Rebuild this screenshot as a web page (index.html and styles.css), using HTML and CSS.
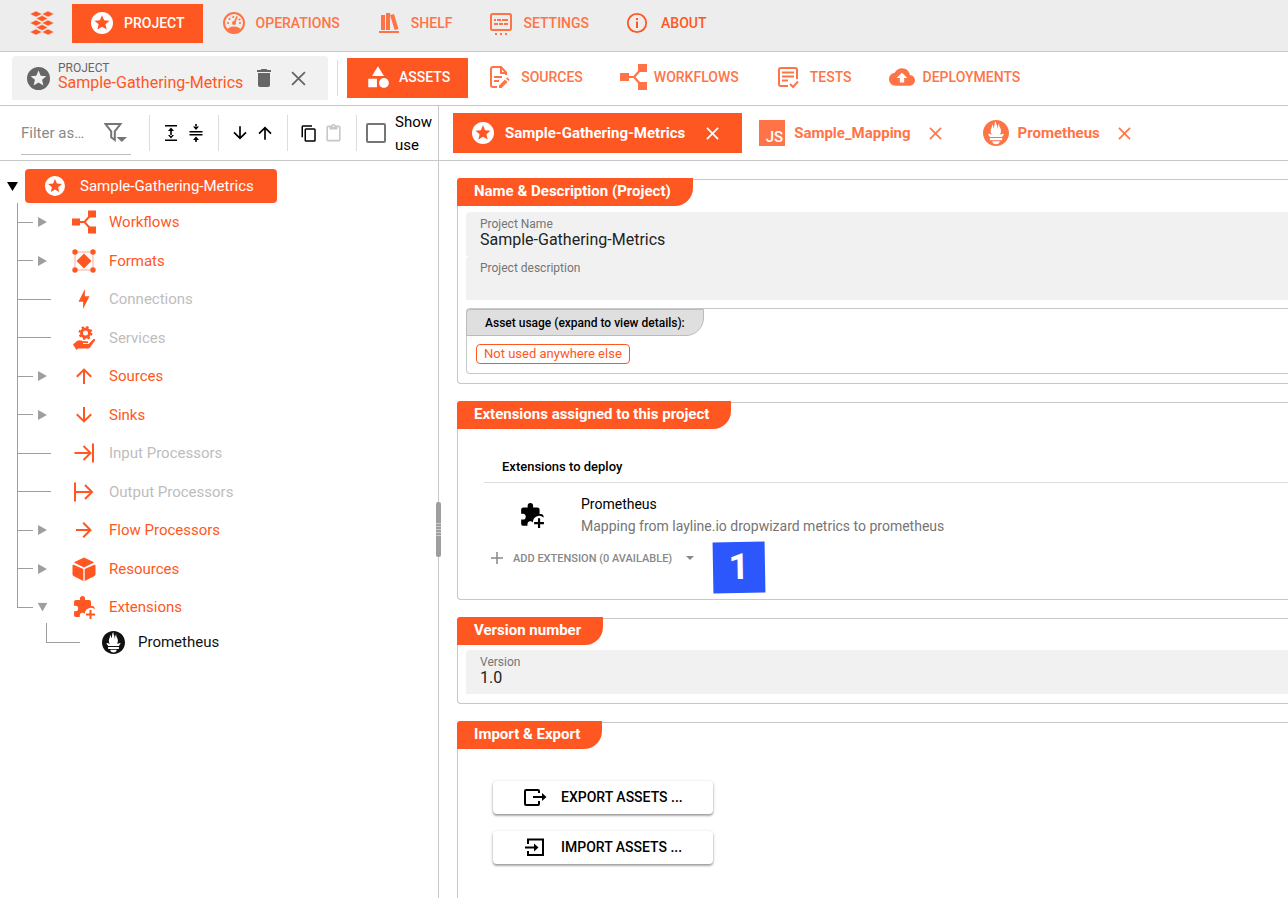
FILE: index.html
```html
<!DOCTYPE html>
<html lang="en">
<head>
<meta charset="utf-8">
<title>Sample-Gathering-Metrics</title>
<link rel="stylesheet" href="styles.css">
</head>
<body>
<svg class="sprite" aria-hidden="true">
  <symbol id="star" viewBox="2 2 20 20"><path d="M16.23,18L12,15.45L7.77,18L8.89,13.19L5.16,9.96L10.08,9.54L12,5L13.92,9.53L18.84,9.95L15.11,13.18L16.23,18M12,2C6.47,2 2,6.5 2,12A10,10 0 0,0 12,22A10,10 0 0,0 22,12A10,10 0 0,0 12,2Z"/></symbol>
  <symbol id="close" viewBox="0 0 14 14"><path d="M1 1L13 13M13 1L1 13" fill="none" stroke="currentColor" stroke-width="1.7"/></symbol>
  <symbol id="workflow" viewBox="0 0 27 26"><path d="M0 9h9v8H0zM18 0h9v8h-9zM18 18h9v8h-9z"/><path d="M9 13h5M22 4l-8 9 8 9" fill="none" stroke="currentColor" stroke-width="2.2"/></symbol>
  <symbol id="prometheus" viewBox="0 0 24 24"><path d="M12 0C5.373 0 0 5.372 0 12c0 6.627 5.373 12 12 12s12-5.373 12-12c0-6.628-5.373-12-12-12zm0 22.46c-1.885 0-3.414-1.26-3.414-2.814h6.828c0 1.553-1.528 2.813-3.414 2.813zm5.64-3.745H6.36v-2.046h11.28v2.046zm-.04-3.098H6.391c-.037-.043-.075-.086-.111-.13-1.155-1.401-1.427-2.133-1.69-2.879-.005-.025 1.4.287 2.395.511 0 0 .513.119 1.262.255-.72-.843-1.147-1.915-1.147-3.01 0-2.406 1.845-4.508 1.18-6.207.648.053 1.34 1.367 1.387 3.422.689-.951.977-2.69.977-3.755 0-1.103.727-2.385 1.454-2.429-.648 1.069.168 1.984.894 4.256.272.854.237 2.29.447 3.201.07-1.892.395-4.652 1.595-5.605-.529 1.2.079 2.702.494 3.424.671 1.164 1.078 2.047 1.078 3.716a4.642 4.642 0 01-1.11 2.996c.792-.149 1.34-.283 1.34-.283l2.573-.502s-.374 1.538-1.81 3.019z"/></symbol>
  <symbol id="arrow-up" viewBox="0 0 24 24"><path d="M13,20H11V8L5.5,13.5L4.08,12.08L12,4.16L19.92,12.08L18.5,13.5L13,8V20Z"/></symbol>
  <symbol id="arrow-down" viewBox="0 0 24 24"><path d="M11,4H13V16L18.5,10.5L19.92,11.92L12,19.84L4.08,11.92L5.5,10.5L11,16V4Z"/></symbol>
  <symbol id="arrow-right" viewBox="0 0 24 24"><path d="M4,11V13H16L10.5,18.5L11.92,19.92L19.84,12L11.92,4.08L10.5,5.5L16,11H4Z"/></symbol>
  <symbol id="puzzle" viewBox="0 0 24 24"><path d="M20 11h-1V7a2 2 0 0 0-2-2h-4V3.5a2.5 2.5 0 0 0-5 0V5H4a2 2 0 0 0-2 2v3.8h1.500a2.700 2.700 0 0 1 0 5.400H2V20a2 2 0 0 0 2 2h3.800v-1.500a2.700 2.700 0 0 1 5-1.500A6 6 0 0 1 22.600 14.200 2.500 2.500 0 0 0 20 11z"/><path d="M17.500 15h2v3.500H23v2h-3.500V24h-2v-3.500H14v-2h3.500z"/></symbol>
  <symbol id="caret" viewBox="0 0 8 9"><path d="M0 0L8 4.500L0 9z"/></symbol>
</svg>

<header class="app-bar">
  <a class="logo" href="#" aria-label="Home">
    <svg width="24" height="24" viewBox="0 0 24 24"><path d="M0 3l6-3 6 3-6 3zM12 3l6-3 6 3-6 3zM6 7.500l6-3 6 3-6 3zM0 12l6-3 6 3-6 3zM12 12l6-3 6 3-6 3zM6 16.500l6-3 6 3-6 3zM0 21l6-3 6 3-6 3zM12 21l6-3 6 3-6 3z" stroke="#ededed" stroke-width=".5"/></svg>
  </a>
  <nav class="nav">
    <button class="nav-item active"><span class="ico"><svg width="22" height="22"><use href="#star"/></svg></span>PROJECT</button>
    <button class="nav-item"><span class="ico"><svg width="24" height="24" viewBox="0 0 24 24"><circle cx="12" cy="12" r="10" fill="none" stroke="currentColor" stroke-width="2"/><path d="M4.500 19.500C6 16.500 9 15.500 12 15.500s6 1 7.500 4A11 11 0 0 1 4.500 19.500z"/><circle cx="12" cy="12" r="2"/><path d="M11.500 11.500L14.500 5l1.300.6-2.500 6.800z"/><circle cx="6" cy="12" r="1.100"/><circle cx="7.500" cy="8" r="1.100"/><circle cx="11.300" cy="6" r="1.100"/><circle cx="18" cy="12" r="1.100"/><circle cx="17.500" cy="8.500" r="1.100"/></svg></span>OPERATIONS</button>
    <button class="nav-item"><span class="ico"><svg width="24" height="24" viewBox="0 0 24 24"><path d="M4 4h4v15H4zM9 2h4v17H9zM13 4l4-1 4.500 15-3.800 1zM2 20h20v2H2z"/></svg></span>SHELF</button>
    <button class="nav-item"><span class="ico"><svg width="24" height="24" viewBox="0 0 24 24"><rect x="2" y="3" width="20" height="16" rx="1.500" fill="none" stroke="currentColor" stroke-width="2"/><path d="M5 8h2v2H5zM8 8h4v2H8zM13 8h6v2h-6zM5 12h4v2H5zM10 12h4v2h-4zM15 12h4v2h-4zM6 22h2v2H6zM11 22h2v2h-2zM16 22h2v2h-2z"/></svg></span>SETTINGS</button>
    <button class="nav-item about"><span class="ico"><svg width="22" height="22" viewBox="0 0 22 22"><circle cx="11" cy="11" r="9.200" fill="none" stroke="currentColor" stroke-width="1.800"/><path d="M10 6h2v2h-2zM10 9.500h2V16h-2z"/></svg></span>ABOUT</button>
  </nav>
</header>

<div class="project-bar">
  <div class="project-chip">
    <svg width="23" height="23"><use href="#star"/></svg>
    <div class="project-label"><span class="overline">PROJECT</span><span class="project-name">Sample-Gathering-Metrics</span></div>
    <button class="plain" aria-label="Delete project"><svg width="24" height="24" viewBox="0 0 24 24"><path d="M19,4H15.500L14.500,3H9.500L8.500,4H5V6H19M6,19A2,2 0 0,0 8,21H16A2,2 0 0,0 18,19V7H6V19Z"/></svg></button>
    <button class="plain" aria-label="Close project"><svg width="15" height="15"><use href="#close"/></svg></button>
  </div>
  <nav class="nav sub">
    <button class="nav-item active"><span class="ico"><svg width="26" height="26" viewBox="0 0 24 24"><path d="M11,13.500V21.500H3V13.500H11M12,2L17.500,11H6.500L12,2M17.500,13C20,13 22,15 22,17.500C22,20 20,22 17.500,22C15,22 13,20 13,17.500C13,15 15,13 17.500,13Z"/></svg></span>ASSETS</button>
    <button class="nav-item"><span class="ico"><svg width="24" height="24" viewBox="0 0 24 24"><path d="M10 22H6a2 2 0 0 1-2-2V4a2 2 0 0 1 2-2h8l5 5.500V10M14 2v6h5M7 12h8M7 16h5" fill="none" stroke="currentColor" stroke-width="2"/><path d="M12 20.500l6-6 2.500 2.500-6 6H12zM19 13.500l1.200-1.200 2.500 2.500-1.200 1.200z"/></svg></span>SOURCES</button>
    <button class="nav-item"><span class="ico"><svg width="27" height="26"><use href="#workflow"/></svg></span>WORKFLOWS</button>
    <button class="nav-item"><span class="ico"><svg width="24" height="24" viewBox="0 0 24 24"><path d="M12 21H5a2 2 0 0 1-2-2V5a2 2 0 0 1 2-2h14a2 2 0 0 1 2 2v9M6 7.500h12M6 11.500h12M6 15.500h6M14 19l3 3 5-5.500" fill="none" stroke="currentColor" stroke-width="2"/></svg></span>TESTS</button>
    <button class="nav-item"><span class="ico"><svg width="26" height="26" viewBox="0 0 24 24"><path d="M19.350 10.040C18.670 6.590 15.640 4 12 4 9.110 4 6.600 5.640 5.350 8.040 2.340 8.360 0 10.910 0 14c0 3.310 2.690 6 6 6h13c2.760 0 5-2.240 5-5 0-2.640-2.050-4.780-4.650-4.960zM14 13v4h-4v-4H7l5-5 5 5h-3z"/></svg></span>DEPLOYMENTS</button>
  </nav>
</div>

<div class="workspace">
  <aside class="side">
    <div class="toolbar">
      <div class="filter">
        <input type="text" placeholder="Filter as…" aria-label="Filter assets">
        <button class="plain" aria-label="Filter options"><svg width="24" height="22" viewBox="0 0 24 22"><path d="M1.500 2h15l-5.700 7.300V18l-3.600-2.800V9.300z" fill="none" stroke="currentColor" stroke-width="2"/><path d="M12.500 15H23l-5.200 5z"/></svg></button>
      </div>
      <div class="tool-group">
        <button class="tool" aria-label="Expand all"><svg width="16" height="18" viewBox="0 0 16 18"><path d="M2 1h12v1.500H2zM2 15.500h12V17H2zM7.200 6h1.600v6H7.200zM8 3.500l3 3.500H5zM8 14.500l3-3.500H5z"/></svg></button>
        <button class="tool" aria-label="Collapse all"><svg width="16" height="18" viewBox="0 0 16 18"><path d="M1.500 7h13v1.500h-13zM1.500 10h13v1.500h-13zM7.200 0h1.600v3H7.200zM8 6l3-3.500H5zM7.200 15h1.600v3H7.200zM8 12.500l3 3.500H5z"/></svg></button>
      </div>
      <div class="tool-group">
        <button class="tool" aria-label="Move down"><svg width="20" height="20"><use href="#arrow-down"/></svg></button>
        <button class="tool" aria-label="Move up"><svg width="20" height="20"><use href="#arrow-up"/></svg></button>
      </div>
      <div class="tool-group">
        <button class="tool" aria-label="Copy"><svg width="18" height="19" viewBox="0 0 24 24"><path d="M19,21H8V7H19M19,5H8A2,2 0 0,0 6,7V21A2,2 0 0,0 8,23H19A2,2 0 0,0 21,21V7A2,2 0 0,0 19,5M16,1H4A2,2 0 0,0 2,3V17H4V3H16V1Z"/></svg></button>
        <button class="tool" aria-label="Paste" disabled><svg width="19" height="19" viewBox="0 0 24 24"><path d="M19,20H5V4H7V7H17V4H19M12,2A1,1 0 0,1 13,3A1,1 0 0,1 12,4A1,1 0 0,1 11,3A1,1 0 0,1 12,2M19,2H14.820C14.400,0.840 13.300,0 12,0C10.700,0 9.600,0.840 9.180,2H5A2,2 0 0,0 3,4V20A2,2 0 0,0 5,22H19A2,2 0 0,0 21,20V4A2,2 0 0,0 19,2Z"/></svg></button>
      </div>
      <label class="tool-group show-use"><input type="checkbox"><span>Show use</span></label>
    </div>

    <div class="tree">
      <div class="root">
        <svg class="expander" width="11" height="9" viewBox="0 0 11 9"><path d="M0 0h11L5.500 9z"/></svg>
        <button class="root-pill"><svg width="20" height="20"><use href="#star"/></svg>Sample-Gathering-Metrics</button>
      </div>
      <ul class="nodes">
        <li class="branch"><span class="guide"></span><svg class="caret"><use href="#caret"/></svg><span class="node-ico"><svg width="24" height="24"><use href="#workflow"/></svg></span><a href="#">Workflows</a></li>
        <li class="branch"><span class="guide"></span><svg class="caret"><use href="#caret"/></svg><span class="node-ico"><svg width="24" height="24" viewBox="0 0 24 24"><path d="M3 3h18v18H3z" fill="none" stroke="currentColor" stroke-opacity=".5"/><path d="M12 4.500l7.500 7.500-7.500 7.500L4.500 12z"/><circle cx="3" cy="3" r="2.700"/><circle cx="21" cy="3" r="2.700"/><circle cx="3" cy="21" r="2.700"/><circle cx="21" cy="21" r="2.700"/></svg></span><a href="#">Formats</a></li>
        <li class="leaf"><span class="guide"></span><span class="node-ico"><svg width="22" height="22" viewBox="0 0 24 24"><path d="M11 15H6L13 1V9H18L11 23V15Z"/></svg></span><a href="#">Connections</a></li>
        <li class="leaf"><span class="guide"></span><span class="node-ico"><svg width="24" height="24" viewBox="0 0 24 24"><circle cx="13.500" cy="7" r="4" fill="none" stroke="currentColor" stroke-width="3"/><circle cx="13.500" cy="7" r="6" fill="none" stroke="currentColor" stroke-width="2" stroke-dasharray="2.360"/><path d="M1 18.500L5 15c1.500-1.200 4-1 6 .3h4.500c1 0 1 1.700 0 1.700H11v1h5.500l4.500-4.500c1-1 2.500 0 2 1l-5 7c-.5.700-1.200 1-2 1H6l-1.500 1.500z"/></svg></span><a href="#">Services</a></li>
        <li class="branch"><span class="guide"></span><svg class="caret"><use href="#caret"/></svg><span class="node-ico"><svg width="24" height="24"><use href="#arrow-up"/></svg></span><a href="#">Sources</a></li>
        <li class="branch"><span class="guide"></span><svg class="caret"><use href="#caret"/></svg><span class="node-ico"><svg width="24" height="24"><use href="#arrow-down"/></svg></span><a href="#">Sinks</a></li>
        <li class="leaf"><span class="guide"></span><span class="node-ico"><svg width="24" height="24" viewBox="0 0 24 24"><path d="M2.500 12H19M11.500 5l7 7-7 7M21 2.500v19" fill="none" stroke="currentColor" stroke-width="2"/></svg></span><a href="#">Input Processors</a></li>
        <li class="leaf"><span class="guide"></span><span class="node-ico"><svg width="24" height="24" viewBox="0 0 24 24"><path d="M4 12H20M13 5l7 7-7 7M3 2.500v19" fill="none" stroke="currentColor" stroke-width="2"/></svg></span><a href="#">Output Processors</a></li>
        <li class="branch"><span class="guide"></span><svg class="caret"><use href="#caret"/></svg><span class="node-ico"><svg width="24" height="24"><use href="#arrow-right"/></svg></span><a href="#">Flow Processors</a></li>
        <li class="branch"><span class="guide"></span><svg class="caret"><use href="#caret"/></svg><span class="node-ico"><svg width="24" height="24" viewBox="0 0 24 24"><path d="M12 .5l9.500 4.500c.4.200.4.600 0 .8L12 10.500 2.500 5.800c-.4-.2-.4-.6 0-.8zM.5 8.500c0-.7.500-1 1.200-.7L11.300 12v12l-9.800-5c-.7-.4-1-.8-1-1.500zM23.500 8.500c0-.7-.5-1-1.200-.7L12.700 12v12l9.800-5c.7-.4 1-.8 1-1.500z"/></svg></span><a href="#">Resources</a></li>
        <li class="branch last"><span class="guide"></span><svg class="caret open"><use href="#caret"/></svg><span class="node-ico"><svg width="24" height="24"><use href="#puzzle"/></svg></span><a href="#">Extensions</a></li>
      </ul>
      <ul class="nodes nested">
        <li class="leaf last"><span class="guide"></span><span class="node-ico"><svg width="23" height="23"><use href="#prometheus"/></svg></span><a href="#">Prometheus</a></li>
      </ul>
    </div>
    <span class="grip"></span>
  </aside>

  <main class="main">
    <div class="tabs">
      <div class="tab active"><span class="tab-ico"><svg width="22" height="22"><use href="#star"/></svg></span><a href="#">Sample-Gathering-Metrics</a><button class="plain" aria-label="Close tab"><svg width="13" height="13"><use href="#close"/></svg></button></div>
      <div class="tab"><span class="tab-ico js">JS</span><a href="#">Sample_Mapping</a><button class="plain" aria-label="Close tab"><svg width="13" height="13"><use href="#close"/></svg></button></div>
      <div class="tab"><span class="tab-ico"><svg width="26" height="26"><use href="#prometheus"/></svg></span><a href="#">Prometheus</a><button class="plain" aria-label="Close tab"><svg width="13" height="13"><use href="#close"/></svg></button></div>
    </div>

    <div class="content">
      <section class="card">
        <h2>Name &amp; Description (Project)</h2>
        <div class="fields">
          <div class="field"><label for="pname">Project Name</label><input id="pname" type="text" value="Sample-Gathering-Metrics"></div>
          <div class="field"><label for="pdesc">Project description</label><input id="pdesc" type="text"></div>
        </div>
        <div class="usage">
          <button class="usage-title">Asset usage (expand to view details):</button>
          <span class="chip">Not used anywhere else</span>
        </div>
      </section>

      <section class="card">
        <h2>Extensions assigned to this project</h2>
        <div class="extensions">
          <h3>Extensions to deploy</h3>
          <div class="ext">
            <svg width="26" height="26"><use href="#puzzle"/></svg>
            <div><div class="ext-name">Prometheus</div><div class="ext-desc">Mapping from layline.io dropwizard metrics to prometheus</div></div>
          </div>
          <div class="add-row">
            <button class="add"><svg width="12" height="12" viewBox="0 0 12 12"><path d="M6 0v12M0 6h12" stroke="currentColor" stroke-width="1.500"/></svg><span>ADD EXTENSION (0 AVAILABLE)</span><svg width="8" height="4" viewBox="0 0 8 4"><path d="M0 0h8L4 4z"/></svg></button>
            <span class="marker">1</span>
          </div>
        </div>
      </section>

      <section class="card">
        <h2>Version number</h2>
        <div class="fields version">
          <div class="field"><label for="ver">Version</label><input id="ver" type="text" value="1.0"></div>
        </div>
      </section>

      <section class="card">
        <h2>Import &amp; Export</h2>
        <div class="transfer">
          <button class="raised"><svg width="24" height="24" viewBox="0 0 24 24"><path d="M16 8V6a1 1 0 0 0-1-1H3a1 1 0 0 0-1 1v13a1 1 0 0 0 1 1h12a1 1 0 0 0 1-1v-3M10 12h10" fill="none" stroke="currentColor" stroke-width="2"/><path d="M19 8l4.500 4L19 16z"/></svg>EXPORT ASSETS ...</button>
          <button class="raised"><svg width="24" height="24" viewBox="0 0 24 24"><path d="M5 9V4.500h15v15.500H5V16M2 12.500h11" fill="none" stroke="currentColor" stroke-width="2"/><path d="M11 8.500l4.500 4-4.500 4z"/></svg>IMPORT ASSETS ...</button>
        </div>
      </section>
    </div>
  </main>
</div>
</body>
</html>
```
FILE: styles.css
```css
* { box-sizing: border-box; }

:root {
  --accent: #ff5722;
  --accent-soft: #ff7446;
  --line: #c8c8c8;
  --field: #f1f1f1;
  --grey: #757575;
}

body {
  margin: 0;
  min-height: 100vh;
  display: flex;
  flex-direction: column;
  overflow: hidden;
  background: #fff;
  color: #000;
  font-family: Roboto, "Liberation Sans", sans-serif;
  font-size: 14px;
}

svg { fill: currentColor; flex: none; display: block; }
.sprite { position: absolute; width: 0; height: 0; }
button, input { font: inherit; color: inherit; }
button { border: 0; padding: 0; background: none; }
a { color: inherit; text-decoration: none; }
h2, h3, ul { margin: 0; padding: 0; }
ul { list-style: none; }
.plain { display: grid; place-items: center; }

/* top bar */
.app-bar {
  display: flex;
  height: 52px;
  padding: 4px 0 0 30px;
  background: #ededed;
  border-bottom: 1px solid var(--line);
}
.logo { color: var(--accent); padding-top: 7px; width: 42px; }
.nav { display: flex; align-items: flex-start; }
.nav-item {
  display: flex;
  align-items: center;
  gap: 10px;
  height: 39px;
  padding: 0 18px 2px 19px;
  font-weight: 500;
  color: var(--accent-soft);
  white-space: nowrap;
}
.nav-item.active { padding-left: 18px; background: var(--accent); color: #fff; }
.nav-item.about { color: var(--accent); gap: 12px; padding-left: 18px; }
.ico { width: 24px; display: grid; place-items: center; flex: none; }

/* project bar */
.project-bar {
  display: flex;
  height: 54px;
  padding: 4px 0 0 12px;
  border-bottom: 1px solid var(--line);
}
.project-chip {
  display: flex;
  align-items: center;
  height: 44px;
  width: 316px;
  padding: 0 22px 0 15px;
  background: var(--field);
  border-radius: 4px 4px 0 0;
  color: #666;
}
.project-label { display: flex; flex-direction: column; flex: 1; padding: 0 0 4px 8px; }
.overline { font-size: 12px; line-height: 13px; }
.project-name { font-size: 16px; line-height: 16px; color: var(--accent); }
.project-chip .plain + .plain { margin-left: 15px; }
.nav.sub {
  margin-left: 9px;
  padding-left: 9px;
  border-left: 1px solid #ddd;
  height: 36px;
  margin-top: 4px;
}
.nav.sub .nav-item { height: 40px; margin-top: -2px; }

/* workspace */
.workspace { display: flex; flex: 1; }
.side {
  position: relative;
  flex: none;
  width: 439px;
  border-right: 1px solid var(--line);
}
.toolbar, .tabs {
  display: flex;
  align-items: center;
  height: 55px;
  border-bottom: 1px solid var(--line);
}
.toolbar { padding-left: 21px; }
.filter {
  display: flex;
  align-items: center;
  width: 110px;
  height: 43px;
  margin: 1px 18px 0 0;
  border-bottom: 1px solid #bdbdbd;
  color: var(--grey);
}
.filter input {
  width: 83px;
  padding: 0;
  border: 0;
  background: none;
  outline: 0;
  font-size: 15px;
}
.filter input::placeholder { color: #8a8a8a; opacity: 1; }
.tool-group {
  display: flex;
  align-items: center;
  height: 36px;
  padding: 0 10px 0 8px;
  border-left: 1px solid #ddd;
}
.tool { width: 25px; height: 25px; display: grid; place-items: center; }
.tool:disabled { color: #c8c8c8; }
.show-use { flex: 1; gap: 9px; padding: 0 0 0 9px; font-size: 15px; line-height: 23px; }
.show-use input {
  appearance: none;
  flex: none;
  width: 20px;
  height: 20px;
  margin: 0;
  border: 2px solid var(--grey);
  border-radius: 2px;
}
.show-use span { width: 40px; padding-top: 2px; }

/* tree */
.tree { padding-top: 8px; font-size: 15px; }
.root { display: flex; align-items: center; padding-left: 7px; gap: 7px; }
.root-pill {
  display: flex;
  align-items: center;
  gap: 15px;
  height: 34px;
  padding: 0 23px 0 20px;
  border-radius: 4px;
  background: var(--accent);
  color: #fff;
}
.nodes { padding-left: 17px; color: var(--accent); }
.nodes li { display: flex; align-items: center; height: 38px; }
.nodes li:nth-child(even) { height: 39px; }
.guide {
  flex: none;
  align-self: stretch;
  width: 34px;
  margin-right: 21px;
  background:
    linear-gradient(#9e9e9e, #9e9e9e) 0 0 / 1px 100% no-repeat,
    linear-gradient(#9e9e9e, #9e9e9e) 0 50% / 100% 1px no-repeat;
}
.branch .guide { width: 16px; margin-right: 5px; }
.last .guide { background-size: 1px 50%, 100% 1px; }
.caret { width: 9px; height: 10px; margin-right: 25px; color: #9e9e9e; }
.caret.open { transform: rotate(90deg); }
.node-ico { width: 24px; margin-right: 13px; display: grid; place-items: center; }
.leaf a { color: #bdbdbd; }
.nested { margin-top: -3px; padding-left: 46px; }
.nested a, .nested .node-ico { color: #111; }
.grip {
  position: absolute;
  left: 436px;
  top: 396px;
  width: 5px;
  height: 55px;
  border-radius: 2px;
  background:
    repeating-linear-gradient(#ccc 0 1px, transparent 1px 3px) 0 50% / 5px 13px no-repeat,
    #9e9e9e;
}

/* tabs */
.main { flex: 1; min-width: 0; }
.tabs { padding-left: 14px; }
.tab {
  display: flex;
  align-items: center;
  height: 40px;
  padding: 0 0 0 17px;
  font-size: 15px;
  font-weight: 700;
  color: var(--accent-soft);
  white-space: nowrap;
}
.tab.active { background: var(--accent); color: #fff; }
.tab-ico { width: 26px; margin-right: 9px; display: grid; place-items: center; }
.tab-ico.js {
  height: 26px;
  padding: 8px 2px 0 0;
  justify-content: end;
  background: var(--accent-soft);
  color: #fff;
  font-size: 15px;
  font-weight: 500;
  line-height: 18px;
}
.tab .plain { width: 20px; height: 20px; margin: 0 20px 0 15px; }
.tab.active .plain { margin-left: 17px; }

/* cards */
.content { padding: 18px 0 0 18px; display: grid; gap: 18px; }
.card {
  border: 1px solid var(--line);
  border-right: 0;
  border-radius: 4px 0 0 4px;
}
.card:last-child { border-bottom: 0; border-radius: 4px 0 0 0; }
.card h2 {
  width: max-content;
  height: 28px;
  margin: -2px 0 0 -1px;
  padding: 0 22px 0 17px;
  border-radius: 3px 0 18px 0;
  background: var(--accent);
  color: #fff;
  font-size: 15px;
  line-height: 27px;
}
.fields { padding: 6px 0 0 8px; }
.field {
  display: flex;
  flex-direction: column;
  height: 44px;
  padding: 6px 14px 0;
  background: var(--field);
  border-radius: 4px 0 0 0;
}
.field label { font-size: 12px; line-height: 12px; color: var(--grey); }
.field input {
  height: 19px;
  padding: 0;
  border: 0;
  background: none;
  outline: 0;
  font-size: 16px;
  color: #222;
}
.fields.version { padding-top: 5px; padding-bottom: 9px; }
.usage {
  margin: 8px 0 9px 8px;
  padding-bottom: 9px;
  border: 1px solid var(--line);
  border-right: 0;
  border-radius: 4px 0 0 4px;
}
.usage-title {
  display: block;
  height: 27px;
  margin: 0 0 8px -1px;
  padding: 0 18px;
  border: 1px solid #bbb;
  border-radius: 4px 0 18px 0;
  background: #dfdfdf;
  font-size: 12px;
  font-weight: 500;
}
.chip {
  display: inline-block;
  margin-left: 9px;
  padding: 0 7px;
  border: 1px solid var(--accent);
  border-radius: 4px;
  color: var(--accent);
  font-size: 13px;
  line-height: 18px;
}
.extensions { padding: 28px 0 25px 26px; }
.extensions h3 {
  padding: 0 0 5px 18px;
  border-bottom: 1px solid #ddd;
  font-size: 13px;
  font-weight: 500;
  line-height: 20px;
}
.ext { display: flex; align-items: center; gap: 36px; padding: 10px 0 0 35px; line-height: 22px; }
.ext-desc { color: var(--grey); }
.add-row { position: relative; width: max-content; }
.add {
  display: flex;
  align-items: center;
  gap: 10px;
  height: 32px;
  padding: 0 0 0 7px;
  margin-top: 5px;
  font-size: 11px;
  font-weight: 500;
  color: #888;
}
.add svg:last-child { margin-left: 4px; }
.marker {
  position: absolute;
  left: 229px;
  top: 0;
  width: 52px;
  height: 51px;
  transform: rotate(-1deg);
  background: #2b57fd;
  color: #fff;
  font: 700 36px/51px Roboto, sans-serif;
  text-align: center;
}
.transfer { display: grid; justify-items: start; gap: 17px; padding: 32px 0 40px 35px; }
.raised {
  display: flex;
  align-items: center;
  gap: 14px;
  width: 220px;
  height: 33px;
  padding: 0 0 2px 30px;
  border-radius: 4px;
  background: #fff;
  box-shadow: 0 1px 3px rgba(0, 0, 0, .3), 0 2px 2px rgba(0, 0, 0, .2);
  font-size: 14px;
  font-weight: 500;
}
```
